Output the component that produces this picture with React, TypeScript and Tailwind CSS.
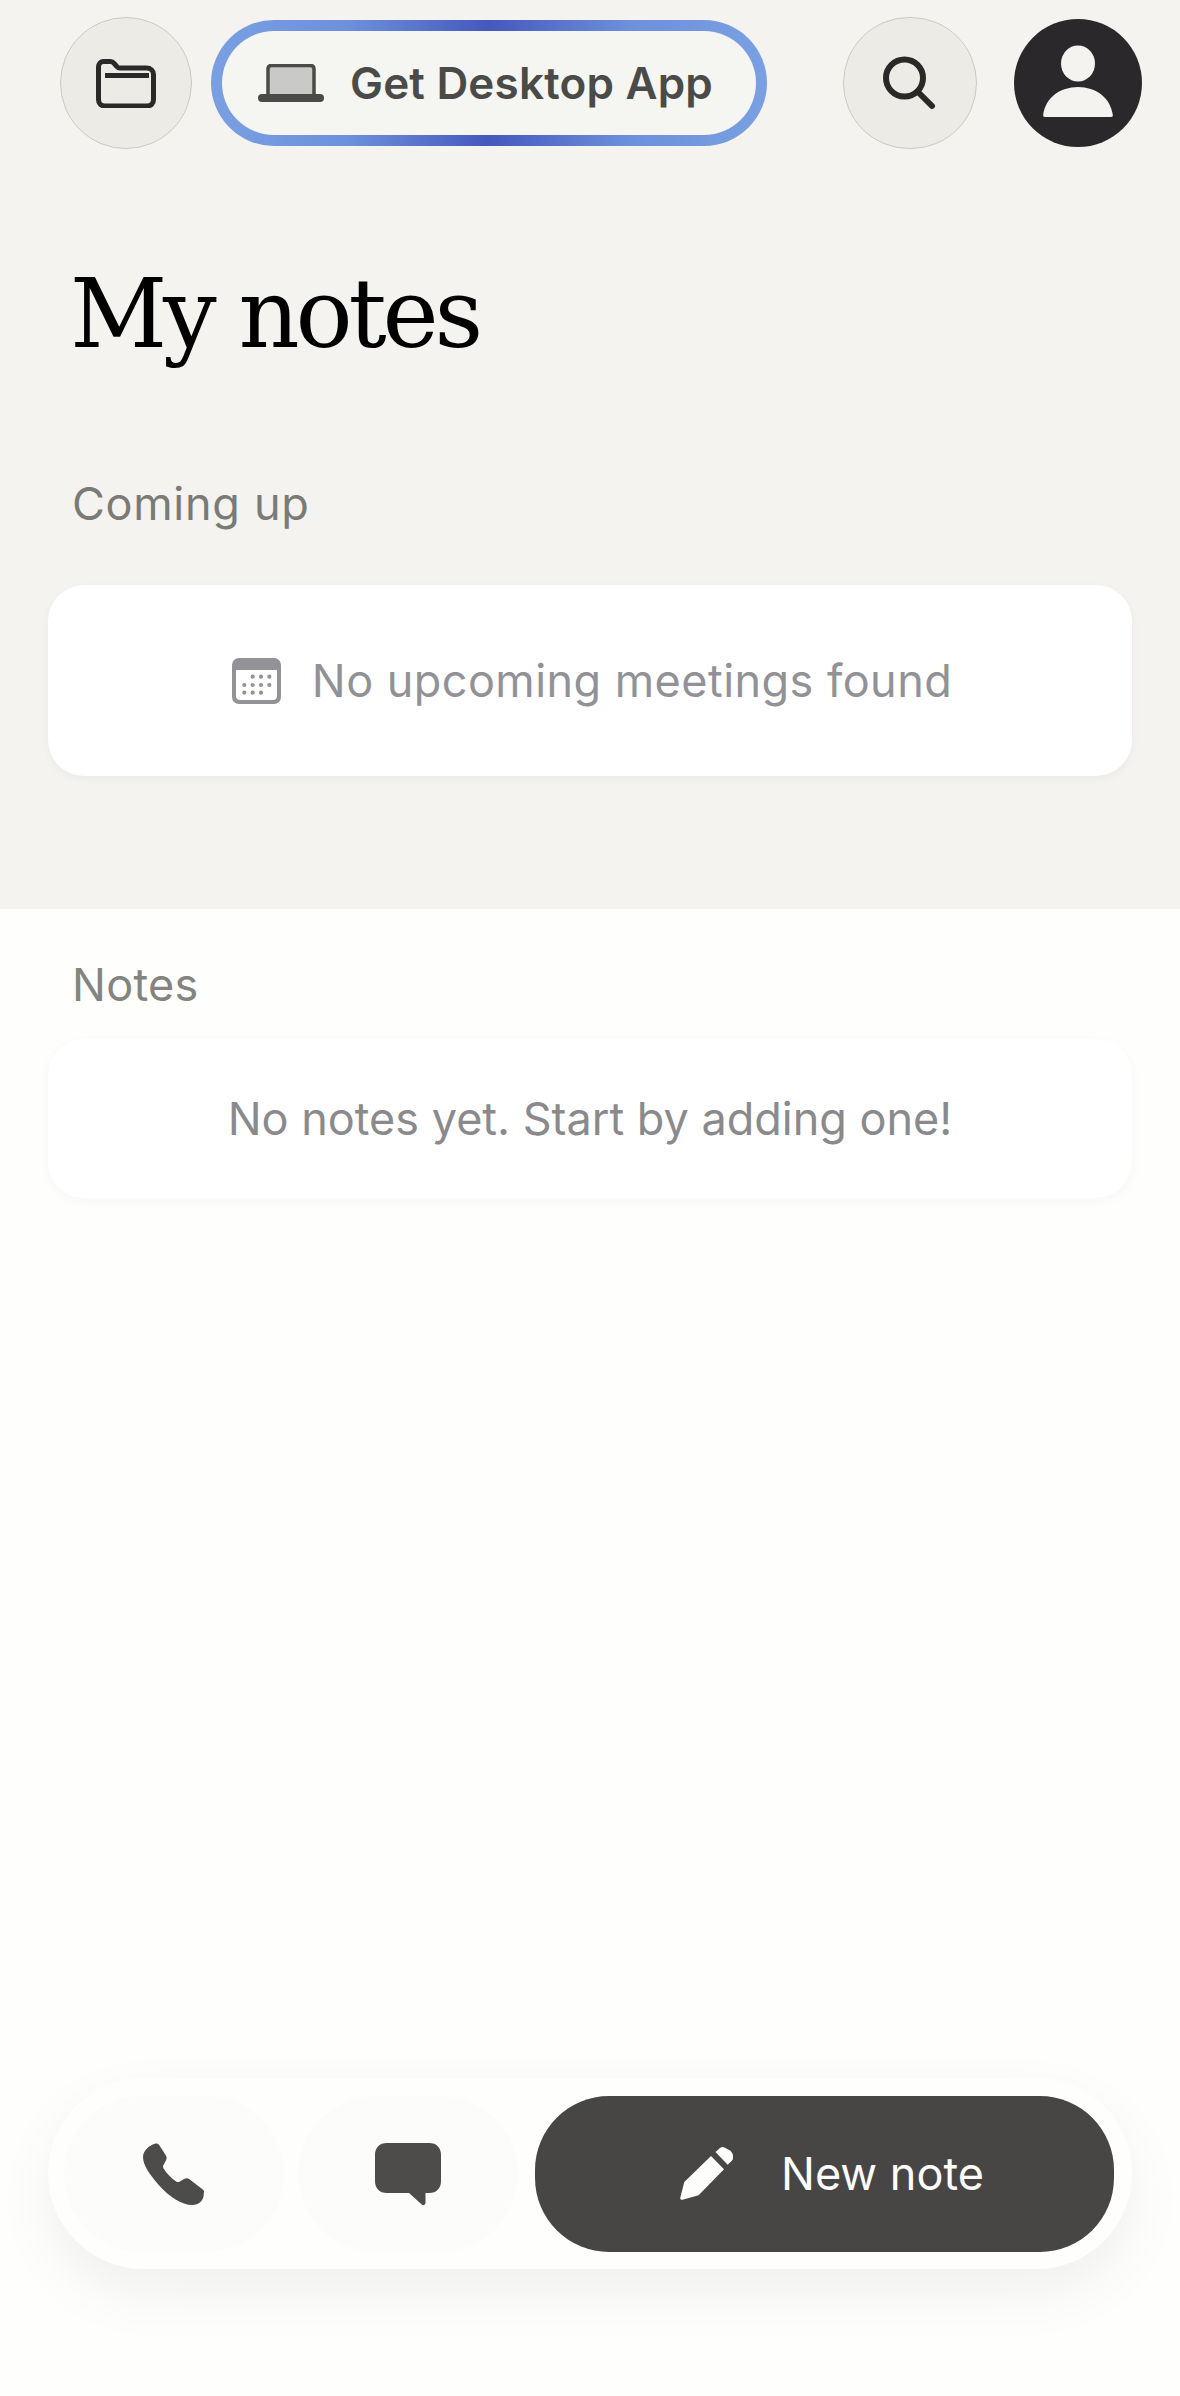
import React from "react";

const sans = "font-['Inter','Liberation_Sans',sans-serif]";

function FolderIcon() {
  return (
    <svg width="60" height="49" viewBox="0 0 60 49" fill="none" stroke="#2a2928" strokeWidth="5" strokeLinejoin="round" strokeLinecap="round">
      <path d="M2.500 8c0-3 2-5.500 5-5.500h7c1.600 0 2.600.6 3.600 1.800l2.800 3.300c.9 1 1.700 1.400 3.100 1.400h26.500c4 0 7 2.500 7 6.500v25c0 4-2.500 6.500-6.500 6.500H9c-4 0-6.500-2.500-6.500-6.500z" />
      <path d="M9 16.500h44" strokeWidth="5" strokeLinecap="butt" />
    </svg>
  );
}

function LaptopIcon() {
  return (
    <svg width="66" height="38" viewBox="0 0 66 38">
      <path d="M10 33V5c0-2 1.200-3.500 3.500-3.500h39c2.300 0 3.500 1.500 3.500 3.500v28z" fill="#c9c9c7" stroke="#4a4a48" strokeWidth="3.500" />
      <rect x="0" y="30" width="66" height="8" rx="4" fill="#4a4a48" />
    </svg>
  );
}

function SearchIcon() {
  return (
    <svg width="54" height="54" viewBox="0 0 54 54" fill="none" stroke="#2a2928" strokeWidth="6" strokeLinecap="round">
      <circle cx="21.500" cy="22" r="18.500" />
      <path d="M35 36l14 14" />
    </svg>
  );
}

function AvatarIcon() {
  return (
    <svg width="128" height="128" viewBox="0 0 128 128">
      <circle cx="64" cy="64" r="64" fill="#2a282a" />
      <ellipse cx="64" cy="44.500" rx="17" ry="18" fill="#f4f3ef" />
      <path d="M31 98c-1.500 0-2-1-1.800-2.300C31.500 79 46 68 64 68s32.500 11 34.800 27.700c.2 1.300-.3 2.300-1.800 2.300z" fill="#f4f3ef" />
    </svg>
  );
}

function CalendarIcon() {
  const dots: [number, number][] = [
    [20.7, 18.7], [29, 18.7], [37.3, 18.7],
    [12.3, 27], [20.7, 27], [29, 27], [37.3, 27],
    [12.3, 34.7], [20.7, 34.7], [29, 34.7],
  ];
  return (
    <svg width="49" height="46" viewBox="0 0 49 46">
      <rect width="49" height="46" rx="7" fill="#939296" />
      <path d="M4 12h41v26c0 2.500-1.500 4-4 4H8c-2.500 0-4-1.500-4-4z" fill="#fff" />
      {dots.map(([x, y]) => (
        <circle key={`${x}-${y}`} cx={x} cy={y} r="2.100" fill="#939296" />
      ))}
    </svg>
  );
}

function PhoneIcon() {
  return (
    <svg width="62" height="62" viewBox="0 0 59 62" preserveAspectRatio="none" fill="#4d4c4b">
      <path d="M12 .5c1.500-.3 2.500.3 3.200 1.300l6.500 10.500c1 1.600 1 3 .3 4.600l-2.600 5.400c-.5 1.200-.5 2 .2 3.200 3 5 7 9.500 12 13 1 .7 2 .8 3 .3l5-3c1.500-.9 3-.8 4.300.2l13 10.500c1.200 1 1.500 2.200 1 3.500C58 58 53 62 47 62 37 62 25 54 15 42 6 31 0 22 0 14 0 8 6 2 12 .5z" />
    </svg>
  );
}

function ChatIcon() {
  return (
    <svg width="66" height="62" viewBox="0 0 66 62" fill="#4d4c4b">
      <path d="M12 0h42c7.500 0 12 4.500 12 12v26c0 7.500-4.500 12-12 12h-3.500v9.500c0 2.500-2.500 3.300-4 1.800L34 50H12C4.500 50 0 45.500 0 38V12C0 4.500 4.500 0 12 0z" />
    </svg>
  );
}

function PencilIcon() {
  return (
    <svg width="53" height="53" viewBox="0 0 53 53" fill="#fdfdfb">
      <path d="M4.300 35 31 9l13 13.300L18.600 48.300 2.500 52.800C1 53 0 52 .3 50.500z" />
      <path d="M35.500 5 40 1c1.500-1.200 3-1.200 4.500-.4L49.500 3.300c2 1.200 3.500 3.500 3.500 5.700v2c0 1-.4 1.800-1 2.500l-4.300 4.200z" />
    </svg>
  );
}

export default function App() {
  return (
    <div className={`flex h-[2396px] w-[1180px] flex-col bg-[#fefefc] ${sans}`}>
      <section className="h-[909px] bg-[#f4f3ef] pt-[17px]">
        <header className="flex items-center pl-[60px]">
          <button className="flex h-[132px] w-[132px] items-center justify-center rounded-full border border-[#cbc9c2] bg-[#ecebe6]">
            <FolderIcon />
          </button>
          <div className="ml-[19px] h-[126px] w-[556px] rounded-full bg-[linear-gradient(90deg,#7aa0e3_0%,#6c90da_25%,#4558bd_50%,#6c90da_75%,#7aa0e3_100%)] p-[11px]">
            <div className="flex h-full items-center rounded-full bg-[#f5f5f1] pl-[36px]">
              <LaptopIcon />
              <span className="ml-[26px] text-[44px] font-[580] leading-none tracking-[0.200px] whitespace-nowrap text-[#4a4a48]">Get Desktop App</span>
            </div>
          </div>
          <button className="ml-[76px] flex h-[132px] w-[134px] items-center justify-center rounded-full border border-[#cbc9c2] bg-[#ecebe6]">
            <SearchIcon />
          </button>
          <div className="ml-[37px] h-[128px] w-[128px]">
            <AvatarIcon />
          </div>
        </header>
        <h1 className="mt-[118px] ml-[70px] font-['DejaVu_Serif',serif] text-[95px] leading-none tracking-[-4.200px] whitespace-nowrap text-black">My notes</h1>
        <h2 className="mt-[119px] ml-[72px] text-[45px] leading-none tracking-[0.700px] text-[#7a7a76]">Coming up</h2>
        <div className="mx-[48px] mt-[59px] flex h-[191px] items-center justify-center rounded-[36px] bg-white pl-[4px] shadow-[0_3px_10px_rgba(0,0,0,0.04)]">
          <CalendarIcon />
          <span className="ml-[31px] text-[45px] leading-none tracking-[0.450px] text-[#929296]">No upcoming meetings found</span>
        </div>
      </section>
      <main className="flex flex-1 flex-col">
        <h2 className="mt-[53px] ml-[72px] text-[45px] leading-none tracking-[0.300px] text-[#838380]">Notes</h2>
        <div className="mx-[48px] mt-[32px] flex h-[159px] items-center justify-center rounded-[36px] bg-white shadow-[0_3px_12px_rgba(0,0,0,0.03)]">
          <span className="text-[45px] leading-none text-[#8a8a8c]">No notes yet. Start by adding one!</span>
        </div>
        <nav className="mx-[48px] mt-auto mb-[127px] flex h-[191px] items-center rounded-full bg-[#fefefd] pl-[16px] pr-[17px] shadow-[0_24px_60px_rgba(0,0,0,0.06)]">
          <button className="flex h-[156px] w-[220px] items-center justify-center rounded-full bg-[#fcfcfb]">
            <PhoneIcon />
          </button>
          <button className="ml-[14px] flex h-[156px] w-[220px] items-center justify-center rounded-full bg-[#fcfcfb]">
            <ChatIcon />
          </button>
          <button className="ml-[17px] flex h-[156px] w-[579px] items-center justify-center rounded-[74px] bg-[#474645] pl-[15px]">
            <PencilIcon />
            <span className="ml-[48px] text-[45px] leading-none text-[#fdfdfb]">New note</span>
          </button>
        </nav>
      </main>
    </div>
  );
}
